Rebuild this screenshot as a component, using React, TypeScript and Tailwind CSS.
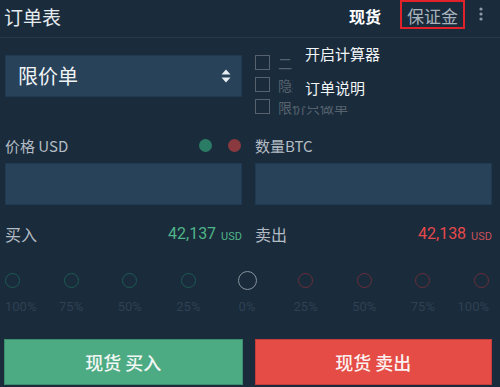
import React from 'react'

const font = { fontFamily: '"Noto Sans CJK SC", Roboto, "Noto Sans", sans-serif' }

const buySteps = ['100%', '75%', '50%', '25%']
const sellSteps = ['25%', '50%', '75%', '100%']

function Step({ label, color, align }: { label: string; color: string; align: 'start' | 'center' | 'end' }) {
  const alignCls = align === 'start' ? 'items-start' : align === 'end' ? 'items-end' : 'items-center'
  return (
    <div className={`flex w-[15px] flex-col ${alignCls}`}>
      <div className={`h-[15px] w-[15px] rounded-full border-[1.5px] ${color}`} />
      <span className="mt-[12px] whitespace-nowrap text-[13px] leading-none text-[#2f4153]">{label}</span>
    </div>
  )
}

export default function App() {
  return (
    <div className="relative h-[387px] w-[500px] overflow-hidden bg-[#1a2b3c] text-white" style={font}>
      {/* header */}
      <div className="flex h-[38px] items-start border-b border-[#26384a]">
        <div className="pl-[4px] pt-[5px] text-[19px] leading-[24px] text-[#e6ebef]">订单表</div>
        <div className="ml-auto flex items-start">
          <span className="mr-[19px] pt-[5px] text-[16px] font-semibold leading-[22px] text-white">现货</span>
          <span className="h-[29px] border-2 border-[#e1222b] px-[5px] pt-[3px] text-[17px] leading-[22px] text-[#a7b2ba]">保证金</span>
          <svg className="ml-[14px] mr-[17px] mt-[7px]" width="4" height="14" viewBox="0 0 4 14">
            <circle cx="2" cy="2" r="1.6" fill="#8d9ba6" />
            <circle cx="2" cy="7" r="1.6" fill="#8d9ba6" />
            <circle cx="2" cy="12" r="1.6" fill="#8d9ba6" />
          </svg>
        </div>
      </div>

      <div className="pl-[5px] pr-[8px]">
        {/* order type + options */}
        <div className="mt-[17px] grid h-[42px] grid-cols-2 gap-[13px]">
          <div className="flex h-[42px] items-center border border-[#1e3a52] bg-[#274259] pl-[12px] pr-[10px]">
            <span className="text-[20px] leading-none text-[#f1f4f6]">限价单</span>
            <svg className="ml-auto" width="10" height="14" viewBox="0 0 10 14">
              <path d="M5 0.5 L9.5 5.5 H0.5 Z" fill="#e8edf0" />
              <path d="M5 13.5 L9.5 8.5 H0.5 Z" fill="#e8edf0" />
            </svg>
          </div>
          <div className="flex flex-col gap-[7px]">
            {['二次确认', '隐藏委托', '限价只做单'].map((t) => (
              <div key={t} className="flex h-[15px] items-center">
                <div className="h-[15px] w-[15px] shrink-0 border-[1.5px] border-[#56636e]" />
                <span className="ml-[8px] whitespace-nowrap text-[14px] leading-none text-[#56636e]">{t}</span>
              </div>
            ))}
          </div>
        </div>

        {/* labels */}
        <div className="mt-[38px] grid grid-cols-2 gap-[13px]">
          <div className="flex h-[20px] items-center">
            <span className="text-[15px] leading-none text-[#b4bcc3]">价格 USD</span>
            <span className="ml-auto h-[13px] w-[13px] rounded-full bg-[#2b7c64]" />
            <span className="ml-[16px] mr-[1px] h-[13px] w-[13px] rounded-full bg-[#8a3a3e]" />
          </div>
          <div className="flex h-[20px] items-center">
            <span className="text-[15px] leading-none text-[#b4bcc3]">数量BTC</span>
          </div>
        </div>

        {/* inputs */}
        <div className="mt-[8px] grid grid-cols-2 gap-[13px]">
          <div className="h-[42px] border border-[#1e3a52] bg-[#274259]" />
          <div className="h-[42px] border border-[#1e3a52] bg-[#274259]" />
        </div>

        {/* prices */}
        <div className="mt-[17px] grid grid-cols-2 gap-[13px]">
          <div className="flex h-[20px] items-end">
            <span className="text-[16px] leading-none text-[#b4bcc3]">买入</span>
            <span className="ml-auto text-[16px] leading-none text-[#4fb487]" style={{ fontFamily: 'Roboto, sans-serif' }}>42,137</span>
            <span className="ml-[5px] text-[11px] leading-none text-[#4fb487]" style={{ fontFamily: 'Roboto, sans-serif' }}>USD</span>
          </div>
          <div className="flex h-[20px] items-end">
            <span className="text-[16px] leading-none text-[#b4bcc3]">卖出</span>
            <span className="ml-auto text-[16px] leading-none text-[#e5484a]" style={{ fontFamily: 'Roboto, sans-serif' }}>42,138</span>
            <span className="ml-[5px] text-[11px] leading-none text-[#c85158]" style={{ fontFamily: 'Roboto, sans-serif' }}>USD</span>
          </div>
        </div>

        {/* percentage slider */}
        <div className="mr-[3px] mt-[31px] flex items-start justify-between" style={{ fontFamily: 'Roboto, sans-serif' }}>
          {buySteps.map((s, i) => (
            <Step key={'b' + i} label={s} color="border-[#1c5b52]" align={i === 0 ? 'start' : 'center'} />
          ))}
          <div className="-mt-[2px] flex w-[15px] flex-col items-center">
            <div className="h-[19px] w-[19px] shrink-0 rounded-full border-[1.5px] border-[#87929b]" />
            <span className="mt-[10px] whitespace-nowrap text-[13px] leading-none text-[#2f4153]">0%</span>
          </div>
          {sellSteps.map((s, i) => (
            <Step key={'s' + i} label={s} color="border-[#6b2e38]" align={i === 3 ? 'end' : 'center'} />
          ))}
        </div>

        {/* buttons */}
        <div className="mt-[26px] grid grid-cols-2 gap-[12px]">
          <button className="-ml-[1px] flex h-[46px] items-center justify-center border border-[#3c8d6c] bg-[#4cab82] text-[18px] font-medium text-[#f3f7f5]">
            现货 买入
          </button>
          <button className="flex h-[46px] items-center justify-center border border-[#c53d3a] bg-[#e44c45] text-[18px] font-medium text-[#fbf1f0]">
            现货 卖出
          </button>
        </div>
      </div>

      {/* popup menu */}
      <div className="absolute left-[293px] right-0 top-[38px] h-[68px] bg-[#1a2b3c] pl-[12px] pt-[5px]">
        <div className="text-[15px] leading-[22px] text-[#f2f5f7]">开启计算器</div>
        <div className="mt-[12px] text-[15px] leading-[22px] text-[#f2f5f7]">订单说明</div>
      </div>
    </div>
  )
}
